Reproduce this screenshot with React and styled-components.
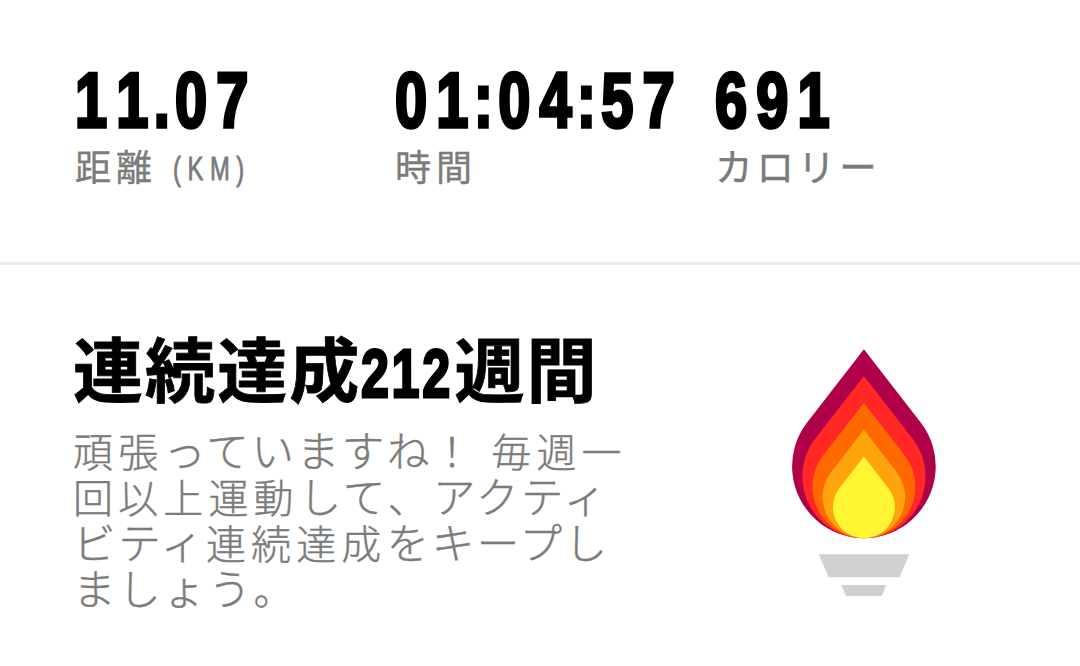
import React from 'react'
import styled, { createGlobalStyle } from 'styled-components'

const black = '#000'
const gray = '#7b7b7b'
const mist = '#e7eeed'
const silver = '#d0d0d0'

const GlobalStyle = createGlobalStyle`
  body {
    margin: 0;
    background: #fff;
    color: ${black};
    font-family: 'Noto Sans CJK JP', sans-serif;
  }
`

const Screen = styled.main`
  width: 1080px;
  height: 666px;
  overflow: hidden;
  display: flex;
  flex-direction: column;
`

const Stats = styled.section`
  box-sizing: border-box;
  height: 265px;
  padding: 60px 0 0 75px;
  display: grid;
  grid-template-columns: repeat(3, 320px);
  align-content: start;
  border-bottom: 3px solid ${mist};
`

const Stat = styled.div`
  white-space: nowrap;
`

const Value = styled.div`
  height: 78px;
  font-family: 'Liberation Sans', sans-serif;
  font-size: 77px;
  line-height: 80px;
  font-weight: 700;
  font-kerning: none;
  letter-spacing: 12.2px;
  -webkit-text-stroke: 3.6px ${black};
  transform: scaleX(0.75);
  transform-origin: left center;
`

const Separator = styled.span`
  margin: 0 -5.2px;
`

const Label = styled.div`
  height: 54px;
  font-size: ${({ $kana }) => $kana ? 37.5 : 36}px;
  line-height: 54px;
  color: ${gray};
  letter-spacing: ${({ $kana }) => $kana ? 3.9 : 5}px;
  -webkit-text-stroke: 0.4px ${gray};
`

const Unit = styled.span`
  display: inline-block;
  margin-left: 16px;
  font-family: 'Liberation Sans', sans-serif;
  font-size: 34px;
  letter-spacing: 9.4px;
  -webkit-text-stroke: 0.9px ${gray};
  transform: translateY(-1px) scaleX(0.7);
  transform-origin: left center;
`

const Streak = styled.section`
  display: flex;
  padding: 65px 0 0 74px;
`

const StreakText = styled.div`
  width: 718px;
`

const Title = styled.h1`
  margin: -5px 0 0 -1px;
  height: 84px;
  display: flex;
  align-items: baseline;
  font-size: 70px;
  line-height: 84px;
  font-weight: 700;
  letter-spacing: 2.1px;
  white-space: nowrap;
  -webkit-text-stroke: 0.8px ${black};
`

const Weeks = styled.span`
  width: 93px;
  font-family: 'Liberation Sans', sans-serif;
  font-size: 68px;
  letter-spacing: 3.5px;
  -webkit-text-stroke: 2.8px ${black};
  transform: scaleX(0.74);
  transform-origin: left center;
`

const Message = styled.p`
  margin: 18px 0 0 -1px;
  font-size: 40px;
  line-height: 46px;
  font-weight: 300;
  color: ${gray};
  letter-spacing: 5.15px;
  white-space: nowrap;
  -webkit-text-stroke: 0.4px ${gray};
`

const Line = styled.span`
  display: block;
  height: 46px;
`

/* Kana run a little larger than kanji on the same pitch */
const Kana = styled.span`
  font-size: 42.5px;
  line-height: 40px;
  letter-spacing: 2.65px;
`

const Flame = styled.svg`
  display: block;
  margin-top: 19px;
`

const stats = [
  { value: '11.07', label: '距離', unit: '(KM)' },
  { value: '01:04:57', label: '時間' },
  { value: '691', label: 'カロリー', kana: true }
]

const message = [
  '頑張っていますね！ 毎週一',
  '回以上運動して、アクティ',
  'ビティ連続達成をキープし',
  'ましょう。'
]

/* Outer to inner, all resting on the same bottom point */
const flames = [
  { color: '#b1004a', scale: 1 },
  { color: '#ff2825', scale: 0.858 },
  { color: '#ff6a00', scale: 0.716 },
  { color: '#fea50d', scale: 0.574 },
  { color: '#fff533', scale: 0.432 }
]

const Torch = () => (
  <Flame width='144' height='250' viewBox='0 0 144 250'>
    {flames.map(({ color, scale }) => (
      <path
        key={color}
        fill={color}
        transform={`translate(71.9 189.2) scale(${scale})`}
        d='M0 -189L56.8 -115.8A71.8 71.8 0 1 1 -56.8 -115.8Z'
      />
    ))}
    <path fill={silver} d='M26.7 205.3H117.3L107.5 228.3H36.7Z' />
    <path fill={silver} d='M49.3 236H94.3L89.7 247H54Z' />
  </Flame>
)

const StatValue = ({ value }) => (
  <Value>
    {value.split(/([.:])/).map((part, index) => (
      /[.:]/.test(part) ? <Separator key={index}>{part}</Separator> : part
    ))}
  </Value>
)

const MessageLine = ({ text }) => (
  <Line>
    {text.split(/([\u3041-\u30ff]+)/).map((part, index) => (
      index % 2 ? <Kana key={index}>{part}</Kana> : part
    ))}
  </Line>
)

const App = () => (
  <Screen>
    <GlobalStyle />
    <Stats>
      {stats.map(({ value, label, unit, kana }) => (
        <Stat key={label}>
          <StatValue value={value} />
          <Label $kana={kana}>
            {label}
            {unit && <Unit>{unit}</Unit>}
          </Label>
        </Stat>
      ))}
    </Stats>
    <Streak>
      <StreakText>
        <Title>連続達成<Weeks>212</Weeks>週間</Title>
        <Message>
          {message.map(text => <MessageLine key={text} text={text} />)}
        </Message>
      </StreakText>
      <Torch />
    </Streak>
  </Screen>
)

export default App
